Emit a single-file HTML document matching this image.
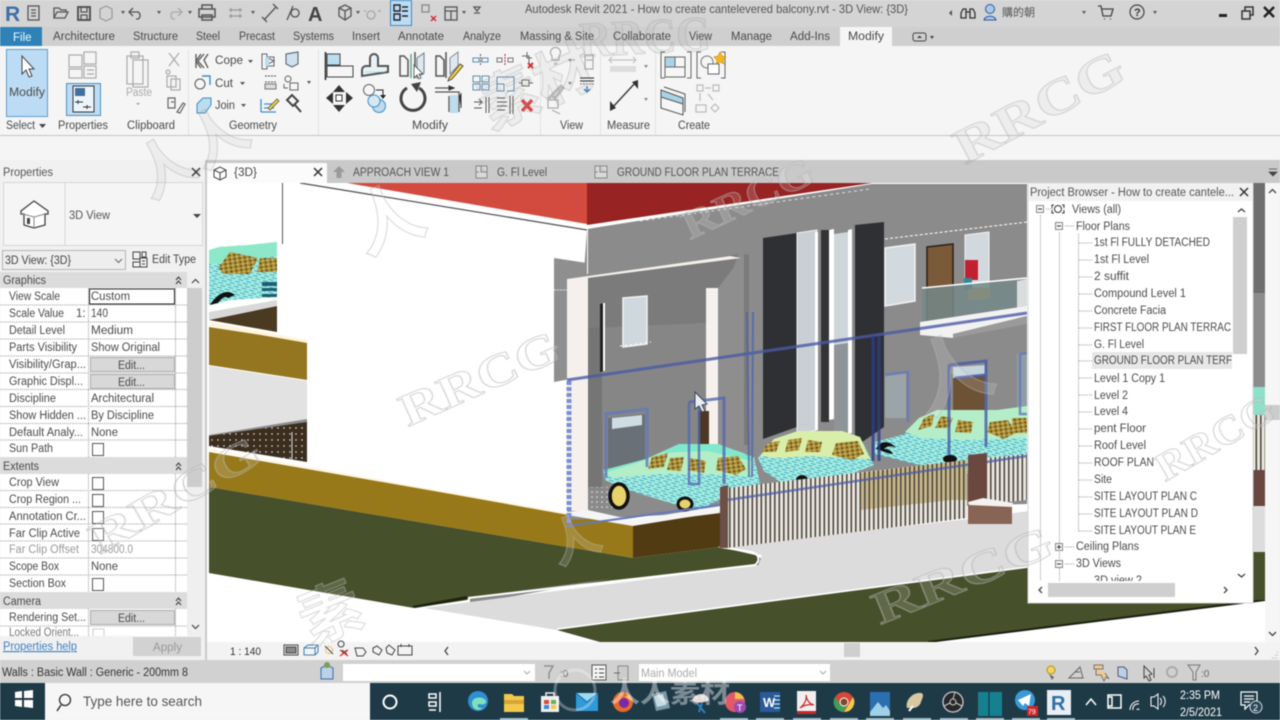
<!DOCTYPE html>
<html><head><meta charset="utf-8"><title>Autodesk Revit 2021</title>
<style>
html,body{margin:0;padding:0;width:1280px;height:720px;overflow:hidden;background:#f0f0f0}
svg{display:block;filter:blur(.5px)}
text{font-family:"Liberation Sans","Noto Sans CJK SC",sans-serif;font-size:11.5px;fill:#4a4a4a}
.t{font-size:11.5px;fill:#4a4a4a}
.g{fill:none;stroke:#555;stroke-width:1.3}
.f{fill:none;stroke:#aaa;stroke-width:1.2}
.b{fill:#bcdcf0;stroke:#555;stroke-width:1.2}
.d{stroke:#9a9a9a;stroke-width:1;stroke-dasharray:1 1;fill:none}
.w{font-family:"Liberation Serif",serif;font-weight:bold;fill:#fff;fill-opacity:.14;stroke:#b4b4b4;stroke-opacity:.5;stroke-width:1.2}
.wd{font-family:"Liberation Serif",serif;font-weight:bold;fill:#888;fill-opacity:.07;stroke:#999;stroke-opacity:.3;stroke-width:1.2}
.wc{font-family:"Noto Sans CJK SC",sans-serif;font-weight:bold;fill:#fff;fill-opacity:.14;stroke:#b4b4b4;stroke-opacity:.45;stroke-width:1.2}
.tb{fill:none;stroke:#fff;stroke-width:1.5}
</style></head><body>
<svg width="1280" height="720" viewBox="0 0 1280 720" xmlns="http://www.w3.org/2000/svg">
<defs>
<pattern id="fence" width="4.500" height="10" patternUnits="userSpaceOnUse"><rect width="1.600" height="10" fill="#4f4840"/></pattern>
<pattern id="dots" width="6" height="6" patternUnits="userSpaceOnUse"><rect width="6" height="6" fill="#3b2e1e"/><circle cx="2" cy="2" r=".7" fill="#fff"/></pattern>
<pattern id="dots2" width="5" height="5" patternUnits="userSpaceOnUse"><rect width="5" height="5" fill="#8a8a8a"/><circle cx="2" cy="2" r=".8" fill="#fff"/></pattern>
<pattern id="car" width="8" height="5" patternUnits="userSpaceOnUse" patternTransform="rotate(14)"><rect width="8" height="5" fill="#a6ecdd"/><path d="M0 1h5M3 3.500h5" stroke="#45aecf" stroke-width=".9"/></pattern>
<pattern id="glass" width="5" height="4" patternUnits="userSpaceOnUse" patternTransform="rotate(-8)"><rect width="5" height="4" fill="#ab8c34"/><circle cx="1.500" cy="1" r=".8" fill="#2e2410"/><circle cx="3.800" cy="3" r=".8" fill="#d2dc98"/></pattern>
<clipPath id="vp"><rect x="209" y="183" width="1056" height="459"/></clipPath>
<clipPath id="pbc"><rect x="1029" y="201" width="203" height="380"/></clipPath>
<clipPath id="propc"><rect x="0" y="288" width="187" height="348"/></clipPath>
</defs>

<!-- chrome backgrounds -->
<rect width="1280" height="720" fill="#f3f3f3"/>
<rect width="1280" height="27" fill="#d4d4d4"/>
<rect y="27" width="1280" height="19" fill="#cfcfcf"/>
<rect y="46" width="1280" height="114" fill="#f5f5f5"/>
<line x1="0" x2="1280" y1="135.500" y2="135.500" stroke="#c4c4c4"/>
<rect y="160" width="1280" height="23" fill="#c9c9c9"/>

<!-- quick access icons -->
<text x="5" y="21" style="font-size:21px;font-weight:bold;fill:#3f6fa6">R</text>
<g class="g">
<rect x="28" y="6" width="11" height="14"/><path d="M31 10h5M31 13h5M31 16h5"/>
<path d="M54 18V8h5l2 2h5v2M54 18l3-6h11l-3 6z"/>
<path d="M78 7h12v13H78z" stroke-width="2"/><path d="M81 7v5h6V7M81 20v-5h6v5"/>
<path class="f" d="M100 9l6-3 6 3v9l-6 3-6-3z" style="stroke:#999"/>
<path d="M133 8l-4 4 4 4M130 12h8a4 4 0 0 1 0 7h-2"/>
<path style="stroke:#aaa" d="M178 8l4 4-4 4M181 12h-8a4 4 0 0 0 0 7h2"/>
<path d="M202 9V5h10v4M199 9h16v8h-16zM202 15h10v5h-10z" stroke-width="1.500"/>
<path style="stroke:#999" d="M229 10h13M229 16h13M231 8v4M231 14v4M240 8v4M240 14v4"/>
<path d="M264 20l12-13M262 17l5 5M273 4l5 5"/>
<path d="M287 20l6-14M295 9a4 4 0 1 0 .100 0"/>
<path d="M339 8l6-3 6 3v8l-6 4-6-4zM339 8l6 3 6-3M345 11v9"/>
<path style="stroke:#a6a6a6" d="M371 11a4 4 0 1 0 .100 0M366 11h-2M378 11h3"/>
</g>
<text x="308" y="21" style="font-size:20px;font-weight:bold;fill:#444">A</text>
<rect x="390.500" y="0.500" width="21" height="25" fill="#bcdcf5" stroke="#3d8ac0"/>
<path d="M394 5h6v6h-6zM394 14h6v6h-6zM402 7h6M402 11h6M402 16h6" fill="none" stroke="#222" stroke-width="1.400"/>
<g class="g"><rect x="422" y="5" width="7" height="7" style="stroke:#888"/><path style="stroke:#c23" d="M431 16l5 5M436 16l-5 5"/><rect x="445" y="7" width="12" height="13"/><path d="M445 11h12M451 11v9"/><path d="M474 7h6l-3 4zM474 13h6" style="stroke:#555"/></g>
<g fill="#555"><path d="M121 11h4l-2 3zM157 11h4l-2 3zM188 11h4l-2 3zM251 11h4l-2 3zM356 11h4l-2 3zM462 11h4l-2 3zM1082 11h4l-2 3zM1153 11h4l-2 3z"/><path d="M952 10l-3 3 3 3z"/></g>

<!-- title -->
<text x="525" y="13" textLength="383" lengthAdjust="spacingAndGlyphs" style="font-size:12px;fill:#555">Autodesk Revit 2021 - How to create cantelevered balcony.rvt - 3D View: {3D}</text>
<g class="g" style="stroke:#333"><path d="M963 9h3v9h-5v-5zM970 9h3l2 4v5h-5z"/><path d="M966 12h4"/></g>
<circle cx="990" cy="9" r="4.500" fill="#a8c8ec" stroke="#2a5aa0"/><path d="M984 20c1-5 11-5 12 0z" fill="#a8c8ec" stroke="#2a5aa0"/>
<text x="1002" y="16" style="font-size:11px;fill:#555">購的朝</text>
<g class="g" style="stroke:#444"><path d="M1098 6h3l2 10h8l2-7h-11M1104 19h1M1110 19h1"/></g>
<circle cx="1137" cy="12" r="7" fill="none" stroke="#444" stroke-width="1.200"/><text x="1134" y="16" style="font-size:11px;font-weight:bold;fill:#333">?</text>
<rect x="1219" y="14" width="8" height="3" fill="#222"/>
<path d="M1242 11h8v8h-8zM1245 11V7h8v8h-3" fill="none" stroke="#333" stroke-width="1.500"/>
<path d="M1264 7l10 10M1274 7l-10 10" stroke="#222" stroke-width="2.500"/>

<!-- tabs -->
<rect y="27" width="42" height="19" fill="#2e82b8"/>
<text x="13" y="41" style="fill:#f4fbff;font-size:11.500px">File</text>
<rect x="840" y="27" width="52" height="19" fill="#f5f5f5"/>
<g class="t">
<text x="53" y="40" textLength="62" lengthAdjust="spacingAndGlyphs">Architecture</text>
<text x="133" y="40" textLength="45" lengthAdjust="spacingAndGlyphs">Structure</text>
<text x="196" y="40" textLength="24" lengthAdjust="spacingAndGlyphs">Steel</text>
<text x="239" y="40" textLength="36" lengthAdjust="spacingAndGlyphs">Precast</text>
<text x="293" y="40" textLength="41" lengthAdjust="spacingAndGlyphs">Systems</text>
<text x="352" y="40" textLength="28" lengthAdjust="spacingAndGlyphs">Insert</text>
<text x="398" y="40" textLength="46" lengthAdjust="spacingAndGlyphs">Annotate</text>
<text x="463" y="40" textLength="38" lengthAdjust="spacingAndGlyphs">Analyze</text>
<text x="520" y="40" textLength="74" lengthAdjust="spacingAndGlyphs">Massing &amp; Site</text>
<text x="613" y="40" textLength="58" lengthAdjust="spacingAndGlyphs">Collaborate</text>
<text x="689" y="40" textLength="23" lengthAdjust="spacingAndGlyphs">View</text>
<text x="731" y="40" textLength="41" lengthAdjust="spacingAndGlyphs">Manage</text>
<text x="790" y="40" textLength="40" lengthAdjust="spacingAndGlyphs">Add-Ins</text>
<text x="848" y="40" textLength="36" lengthAdjust="spacingAndGlyphs">Modify</text>
</g>
<rect x="913" y="33" width="13" height="8" rx="2" fill="none" stroke="#444"/><path d="M917 38l2.500-2.500 2.500 2.500z" fill="#444"/><path d="M930 36h4l-2 3z" fill="#444"/>

<!-- ribbon -->
<g stroke="#e2e2e2"><path d="M188.500 50v85M318.500 50v85M540.500 50v85M600.500 50v85M655.500 50v85"/></g>
<rect x="6.500" y="49.500" width="41" height="67" fill="#bcdcf5" stroke="#5c9ccc"/>
<path d="M22 56v18l4-4 3 7 3-1-3-7h5z" fill="#fff" stroke="#444"/>
<text x="9" y="96" textLength="36" lengthAdjust="spacingAndGlyphs">Modify</text>
<text x="6" y="129" textLength="29" lengthAdjust="spacingAndGlyphs">Select</text><path d="M39 124h7l-3.500 4z" fill="#444"/>
<text x="58" y="129" textLength="50" lengthAdjust="spacingAndGlyphs">Properties</text>
<text x="127" y="129" textLength="48" lengthAdjust="spacingAndGlyphs">Clipboard</text>
<text x="229" y="129" textLength="48" lengthAdjust="spacingAndGlyphs">Geometry</text>
<text x="412" y="129" textLength="36" lengthAdjust="spacingAndGlyphs">Modify</text>
<text x="560" y="129" textLength="23" lengthAdjust="spacingAndGlyphs">View</text>
<text x="607" y="129" textLength="43" lengthAdjust="spacingAndGlyphs">Measure</text>
<text x="678" y="129" textLength="32" lengthAdjust="spacingAndGlyphs">Create</text>

<g class="f"><rect x="69" y="55" width="13" height="12"/><rect x="69" y="69" width="13" height="9"/><rect x="84" y="52" width="12" height="12"/><rect x="84" y="66" width="12" height="12"/><path d="M87 70h7M87 74h7"/></g>
<rect x="66.500" y="83.500" width="34" height="32" fill="#bcdcf5" stroke="#4f8fbf"/>
<rect x="73" y="86" width="21" height="26" fill="#eef5fa" stroke="#333"/><rect x="75" y="88" width="10" height="8" fill="#3f6f9f"/><path d="M75 102h8M78 100v4M83 107h8M87 105v4" stroke="#333" fill="none"/>
<g class="f"><rect x="127" y="56" width="16" height="28"/><rect x="133" y="60" width="15" height="27"/><rect x="131" y="52" width="8" height="6"/></g>
<text x="126" y="96" textLength="26" lengthAdjust="spacingAndGlyphs" style="fill:#aaa">Paste</text><path d="M136 103h4l-2 2z" fill="#999"/>
<g class="f"><path d="M169 53l10 13M179 53l-10 13M168 70a2 2 0 1 0 .1 0"/><rect x="167" y="76" width="9" height="11"/><rect x="171" y="79" width="9" height="11"/></g>
<path d="M168 98h7v10h-7zM171 102h3M177 112l6-9 2 1-5 9z" fill="none" stroke="#666" stroke-width="1.200"/>
<g class="g"><path d="M196 54v14M201 54l-5 7 5 7M204 54l-6 7 6 7M208 54l-4 6 4 8"/></g>
<text x="215" y="64" textLength="28" lengthAdjust="spacingAndGlyphs">Cope</text><path d="M248 60h5l-2.500 3z" fill="#555"/>
<circle cx="200" cy="84" r="5" fill="none" stroke="#555"/><path d="M202 76h8v9" fill="none" stroke="#3f8fc0" stroke-width="1.400"/>
<text x="215" y="87" textLength="18" lengthAdjust="spacingAndGlyphs">Cut</text><path d="M240 82h5l-2.500 3z" fill="#555"/>
<path d="M197 113v-9l6-6h8v7l-6 8z" fill="#bcdcf0" stroke="#3f8fc0"/>
<text x="215" y="109" textLength="20" lengthAdjust="spacingAndGlyphs">Join</text><path d="M241 104h5l-2.500 3z" fill="#555"/>
<path d="M262 54h5v3h7v9h-7v3h-5zM268 58l6 3-6 3z" fill="none" stroke="#666"/><path d="M265 57h4v9h-4z" fill="#bcdcf0"/>
<path d="M286 54l12-2v12l-6 3-6-3z" fill="#cfe0ee" stroke="#556"/>
<path d="M265 76h11M265 82h11" stroke="#555" stroke-dasharray="2 1"/><rect x="265" y="84" width="11" height="5" fill="#ddd" stroke="#777"/>
<circle cx="288" cy="79" r="3" fill="none" stroke="#666"/><rect x="290" y="83" width="8" height="7" fill="none" stroke="#666"/><path d="M284 84v4h4" fill="none" stroke="#666"/><path d="M307 81h4l-2 3z" fill="#555"/>
<path d="M261 112V99M261 112h15M264 108h10M264 104h8" fill="none" stroke="#3f8fc0" stroke-width="1.300"/><path d="M268 108l9-9 2 2-9 9z" fill="#f2d23c" stroke="#555" stroke-width=".8"/>
<path d="M287 100l5-5 6 6-5 5zM295 105l6 7" fill="none" stroke="#444" stroke-width="2"/>

<!-- modify panel -->
<path d="M325.500 52v28" stroke="#222" stroke-width="1.500"/><rect x="327" y="54" width="13" height="11" fill="#bcdcf0" stroke="#444"/><rect x="327" y="66" width="26" height="11" fill="none" stroke="#444"/>
<path d="M362 76v-6a4 4 0 0 1 4-4h4v-8a4 4 0 0 1 8 0v8h10v6z" fill="#e8f1f7" stroke="#555" stroke-width="2"/><path d="M365 72h20" stroke="#8db" stroke-opacity=".6"/>
<path d="M400 56h4l4 4v16h-8zM415 52v26" fill="none" stroke="#555" stroke-width="1.500"/><path d="M411 54v24" stroke="#6a8" stroke-width="1.500"/><path d="M417 58l7-5v20l-7 5z" fill="#dde9f1" stroke="#778"/><path d="M414 65v13l3-3 2 4 2-1-2-4h4z" fill="#fff" stroke="#444" stroke-width=".8"/>
<path d="M436 56h4l4 4v16h-8zM446 52v26" fill="none" stroke="#555" stroke-width="1.500"/><path d="M450 58l8-6v14l-8 8z" fill="#dde9f1" stroke="#889"/><path d="M449 78l11-14 3 2-11 13-4 2z" fill="#f2d23c" stroke="#444" stroke-width=".9"/>
<g fill="none" stroke="#5b8fb0"><path d="M473 58h6v4h-6zM482 58h6v4h-6z"/><path stroke-dasharray="2 1" d="M480.500 54v12" stroke="#555"/><path d="M497 58h5v4h-5zM508 58h5v4h-5z" stroke="#777"/><path stroke-dasharray="2 1" d="M505 54v12" stroke="#a24"/><rect x="473" y="76" width="7" height="6"/><rect x="482" y="76" width="7" height="6"/><rect x="473" y="84" width="7" height="6"/><rect x="482" y="84" width="7" height="6"/><path d="M497 77h17v14h-7M497 77v14h7v-7h-7"/></g>
<g fill="none" stroke="#666"><path d="M522 56h7v7M527 52v6h5"/><path d="M522 80h7v6h-7zM529 83h4M522 83h-3"/></g>
<path d="M528 63l5 5M533 63l-5 5" stroke="#c33" stroke-width="2"/>
<path d="M522 100l10 11M532 100l-10 11" stroke="#d44" stroke-width="3.500"/>
<path d="M474 102h8M479 99l3 3-3 3M474 108h8M486 97v16M489 97v16" fill="none" stroke="#555"/>
<path d="M497 98h8M497 102h10M497 106h10M497 110h8M510 96v18M513 96v18" fill="none" stroke="#555"/>
<path d="M339 85l6 7h-12zM339 112l6-7h-12zM326 98l7-6v12zM353 98l-7-6v12z" fill="#333"/><rect x="336" y="95" width="6" height="6" fill="#fff" stroke="#333"/>
<circle cx="369" cy="90" r="5.500" fill="none" stroke="#666"/><path d="M376 90h7v6" fill="none" stroke="#222"/><path d="M380 95h6l-3 4z" fill="#222"/><circle cx="379" cy="106" r="6.500" fill="#bcdcf0" stroke="#3f8fc0"/><circle cx="374" cy="101" r="6" fill="#d6e8f3" stroke="#3f8fc0"/>
<path d="M407 88a12 12 0 1 0 12 0" fill="none" stroke="#444" stroke-width="3"/><path d="M411 84l10-2-4 10z" fill="#444"/>
<path d="M435 88h19M435 92h24v20M449 96v16" fill="none" stroke="#555" stroke-width="1.300"/><path d="M450 95h8v18h-8z" fill="#bcdcf0"/><path d="M449 86l5 2-5 2zM461 108v-14l-2 3" fill="#333" stroke="#333"/>

<!-- view panel -->
<g class="f"><path d="M552 56a5 5 0 1 1 7 0v4h-7zM554 64h3"/><path d="M572 60h3M585 55h8v14h-8zM586 60h7"/><path d="M551 96l10-10 2 2-8 10zM548 99l4-3" style="stroke:#bbb;stroke-width:3"/><rect x="548" y="100" width="10" height="8"/><path d="M552 110l8 4"/></g>
<path d="M580 78h14M580 81h14" stroke="#222"/><path d="M580 84h14" stroke="#777" stroke-dasharray="2 1"/><path d="M587 86v5M584 89l3 3 3-3" stroke="#3f7fc0" fill="none" stroke-width="1.500"/>
<g fill="#888"><path d="M568 59h4l-2 3zM568 82h4l-2 3zM644 65h4l-2 3zM644 98h4l-2 3z"/></g>
<!-- measure -->
<path d="M610 60h25M612 57l-3 3 3 3M633 57l3 3-3 3" fill="none" stroke="#bbb"/><rect x="610" y="66" width="26" height="6" fill="#ddd"/>
<path d="M612 108l24-26" stroke="#333" stroke-width="1.300"/><path d="M610 101l6 7-6 3zM638 89l-6-7 6-2z" fill="#333"/>
<!-- create -->
<path d="M665 52h-4v26h4M687 52h4v26h-4" fill="none" stroke="#666"/><path d="M665 57h20v20h-20z" fill="#f6f6f6" stroke="#666"/><path d="M665 57h10v10h-10z" fill="#a9d4e6" stroke="#666"/><path d="M675 67h10v10" fill="none" stroke="#666"/>
<path d="M701 52h-4v26h4M721 52h4v26h-4" fill="none" stroke="#666"/><circle cx="707" cy="62" r="6" fill="none" stroke="#777"/><rect x="708" y="64" width="11" height="10" fill="#fff" stroke="#666"/><path d="M720 52l2 4 4 1-3 3 1 4-4-2-4 2 1-4-3-3 4-1z" fill="#f2b824" stroke="#d89010" stroke-width=".7"/>
<path d="M661 90l22 8v16l-22-6z" fill="#a9d4e6" stroke="#555"/><path d="M664 87l21 7v18" fill="none" stroke="#555"/><path d="M661 97l22 7v11l-22-7z" fill="#f6f6f6" stroke="#555"/>
<g class="f" style="stroke:#bbb"><rect x="697" y="85" width="6" height="6"/><path d="M705 88h6"/><rect x="713" y="85" width="6" height="6"/><path d="M700 93v8M708 94l5 6"/><rect x="696" y="105" width="10" height="7"/><path d="M715 104l4 4-4 4-4-4z"/></g>

<!-- view tabs -->
<rect x="207" y="163" width="120" height="20" fill="#fbfbfb"/>
<path d="M214 170l6-3 6 3v7l-6 3-6-3zM214 170l6 3 6-3M220 173v7" fill="#fff" stroke="#444"/>
<text x="234" y="176" textLength="23" lengthAdjust="spacingAndGlyphs">{3D}</text>
<path d="M314 168l8 8M322 168l-8 8" stroke="#333" stroke-width="1.500"/>
<path d="M339 166l6 6h-3.500v6h-5v-6H333z" fill="#9a9a9a"/>
<text x="353" y="176" textLength="96" lengthAdjust="spacingAndGlyphs" style="fill:#555">APPROACH VIEW 1</text>
<path d="M476 166h11v12h-11zM481 166v6h6M476 172h3" fill="#d9d9d9" stroke="#888"/>
<text x="497" y="176" textLength="50" lengthAdjust="spacingAndGlyphs" style="fill:#555">G. Fl Level</text>
<path d="M595 166h12v12h-12zM600 166v6h7M595 172h3" fill="#d9d9d9" stroke="#888"/>
<text x="617" y="176" textLength="162" lengthAdjust="spacingAndGlyphs" style="fill:#555">GROUND FLOOR PLAN TERRACE</text>
<path d="M1269 169h8M1269 172h8l-4 4z" fill="#444" stroke="#444" stroke-width=".7"/>

<!-- 3D SCENE -->
<rect x="207" y="183" width="1073" height="459" fill="#fff"/>
<g clip-path="url(#vp)">
<!-- left small wing -->
<path d="M209 320l68-14v26z" fill="#4a3a22"/><path d="M209 312l68-12v6l-68 14z" fill="#d9d9d9"/>
<path d="M209 327l98 15v38l-98-15z" fill="#957620"/><path d="M209 322l98 18v3l-98-17z" fill="#fff3da"/>
<path d="M209 366l98 15v38l-98 16z" fill="#e2e2e2"/>
<path d="M209 435l98-16v4l-98 14z" fill="#8c8c8c"/>
<path d="M209 436l98-14v40l-98-16z" fill="url(#dots)"/>
<line x1="292" x2="292" y1="432" y2="460" stroke="#ddd"/>
<!-- left car -->
<path d="M209 282l0-27 10-8 30-2 28-3 0 32v23l-45 3-23 5z" fill="url(#car)"/>
<path d="M209 250l10-3 30-2 28-3v14l-68 8z" fill="#8ce8c8"/>
<path d="M218 268l12-16 28 6-8 16-26 0z" fill="url(#glass)"/><path d="M260 258h17v14h-20z" fill="url(#glass)"/>
<path d="M262 282h15v4h-15zM262 288h15v3h-15zM262 294h15v3h-15z" fill="#1c5e72"/>
<path d="M210 305c5-8 15-18 25-10l-7 3c-3-3-7 1-10 5z" fill="#111"/>
<line x1="282.500" x2="282.500" y1="183" y2="244" stroke="#555"/>

<!-- Ground olive -->
<path d="M209 452l358 62 66 8v36l-424-71z" fill="#97791a"/>
<path d="M209 450l358 64" stroke="#fff3da" stroke-width="1.500"/>
<path d="M633 524l87-11v34l-87 11z" fill="#513b12"/>
<path d="M209 487l424 71 87-11 35 8c8 3 8 8 3 10l-288 32-3 3-53 8-205-35z" fill="#46502a"/>
<path d="M415 608l52-9v-3l-55 10z" fill="#1c2412"/>
<path d="M470 604l140-25 8-1-148 19z" fill="#8a8a8a"/>
<!-- pavement -->
<path d="M424 608l46-6 288-37 4-10-45-8 252-28 300-40v120L557 630z" fill="#dcdcdc"/>
<path d="M720 547l32 5c8 3 8 9 3 13l-287 33" fill="none" stroke="#fff" stroke-width="2"/>
<!-- lower right green lawn -->
<path d="M557 630l470-62 238-30v62L928 642H600z" fill="#46502a"/>
<path d="M1265 600L928 642" stroke="#1a1f10" stroke-width="2"/>
<path d="M557 629l470-62" stroke="#fff" stroke-width="1.500"/>

<!-- red roof & wall -->
<path d="M347 183h240v41z" fill="#d24b3e"/>
<path d="M587 183h285L587 225z" fill="#972323"/>
<path d="M300 183l287 47" stroke="#555" stroke-width="1.300"/>
<path d="M587 229L872 184h155v320l-300 8-160 8z" fill="#8b8b8b"/>
<path d="M640 221l230-32" stroke="#fff" stroke-dasharray="3 3" stroke-opacity=".7"/>
<path d="M885 239l142-17" stroke="#fff" stroke-dasharray="3 2"/>
<rect x="587" y="229" width="1" height="45" fill="#fff"/>
<path d="M554 258l33 5v113l-33 6z" fill="#8f8f8f"/>
<path d="M554 290h18" stroke="#ddd" stroke-dasharray="2 1"/>
<!-- portico -->
<path d="M588 288l119-10v165l-119 50z" fill="#868686"/>
<path d="M588 300v190h14V300z" fill="#757575"/>
<path d="M588 278l150-24-22 67-9 2-119 5z" fill="#7b7b7b"/>
<path d="M567 279l163-23 11 2-153 20v3l-21 3z" fill="#f3efea"/>
<path d="M567 279h21v232h-21z" fill="#f5f0eb"/>
<rect x="706" y="288" width="12" height="158" fill="#f6f1ec"/>
<path d="M718 288l26-34 5 1-3 220-28-30z" fill="#8e8e8e"/><path d="M744 254l5 1v190h-5z" fill="#7a7a7a"/>
<path d="M600 304l4-1v68l-4 1z" fill="#222"/><path d="M603 303h2v68h-2z" fill="#fff"/>
<path d="M623 298l24-2v48l-24 3z" fill="#ced8dd" stroke="#f2f2f2" stroke-width="1.500"/>
<path d="M620 346l31-4" stroke="#fff" stroke-dasharray="2 3"/>
<path d="M763 238l34-5v194l-34 12z" fill="#2f3034"/>
<path d="M797 233l20-3v200l-20 4z" fill="#c8d0d5" stroke="#eee"/><path d="M815 232h3v198h-3z" fill="#fff"/>
<path d="M821 230h8v192h-8z" fill="#343437"/>
<path d="M829 230l5-1v190l-5 1z" fill="#fff"/>
<path d="M834 234l14-2v112l-14 1z" fill="#ced6da"/><path d="M834 345l14-2v90h-14z" fill="#8f9498"/>
<path d="M848 230l4-1v204l-4 1z" fill="#fff"/>
<path d="M855 225l29-3v205l-29 20z" fill="#2f3034"/>
<path d="M885 248l30-4v57l-30 5z" fill="#d3dadf" stroke="#f2f2f2" stroke-width="1.500"/>
<path d="M927 247l26-3v90h-26z" fill="#7a5a38" stroke="#2e2018" stroke-width="1.500"/>
<path d="M965 235l24-3v55h-24z" fill="#d2d9de" stroke="#f2f2f2"/>
<rect x="965" y="260" width="13" height="20" fill="#c22030"/>
<rect x="964" y="278" width="8" height="12" fill="#2f8a96"/>
<path d="M968 289l22-1v10l-22 3z" fill="#d9a53a"/>
<path d="M922 288l105-10v38l-105 16z" fill="#74888a" fill-opacity=".85"/>
<path d="M922 288l105-10" stroke="#fff" stroke-width="1.500"/>
<path d="M1017 281l10-2v31h-10z" fill="#d9dddd"/>
<path d="M920 322l107-16v10l-74 18v4l-33-3z" fill="#f2f2f2"/><path d="M953 334l74-18v8l-74 14z" fill="#9a9a9a"/>
<!-- windows & doors lower -->
<path d="M953 367l32-2v72l-32 3z" fill="#6e5236"/><path d="M953 367l32-2v10l-32 3z" fill="#c4d4dc"/>
<rect x="698" y="411" width="11" height="34" fill="#4d3824"/>
<path d="M608 418l37-4v52l-37 4z" fill="#6a7078"/><path d="M612 418l30-3v10l-30 4z" fill="#d0dce4"/>
<path d="M885 375l21-2v45h-21z" fill="#9ba5a8"/>
<path d="M1017 354l10-1v60h-10z" fill="#8e9ea2"/>

<!-- tan wall & speckle behind cars -->
<path d="M588 487h30v24h-30z" fill="url(#dots2)" opacity=".8"/>
<!-- cars -->
<path d="M603 470l42-9 33-15 40-2 36 13 6 26-50 21-8 6-22-4-55-17-20-9z" fill="url(#car)"/>
<path d="M604 470l42-11 33-15 39 0 36 14-2 18-50-2-40 0-50 4z" fill="#b4eec8"/>
<path d="M604 470l42-11 33-15 39 0 36 14-2 3-45-10-45 2-25 10-30 9z" fill="#80e8cc"/>
<path d="M648 469l4-12 16-4-4 14zM667 470l3-12 14-1-3 14zM688 470l2-12 16 3-2 12zM716 470l2-12 20-2 8 13-10 6z" fill="url(#glass)"/>
<path d="M758 458l16-19 24-8 44 0 18 6 14 28-30 12-40 12-10 2-30-20z" fill="url(#car)"/>
<path d="M760 456l14-17 24-8 44 0 18 6 10 22-60-3-30 2z" fill="#d8eeaa"/>
<path d="M762 452l6-9 12-2-4 11zM785 452l3-12 14-2-3 12zM805 452l3-12 14 2-2 10zM832 455l4-12 22-2 6 13-12 6z" fill="url(#glass)"/>
<path d="M875 442l30-8 14-14 18-8 60 0 30-4v54l-40 4-22 8-50-10-40-10z" fill="url(#car)"/>
<path d="M905 432l14-14 18-8 60 0 30-4v32l-60 2-45-2z" fill="#b4eec8"/>
<path d="M918 430l6-12 10-4-2 12zM935 428l6-12 12 2-4 10zM955 432l3-12 15 2-2 11zM987 432l3-10 18-2 8 13-12 6z" fill="url(#glass)"/>
<path d="M1012 418h15v15h-15z" fill="url(#glass)"/>
<path d="M876 449c4-9 14-9 20-1-5-3-9-2-12 1 4 0 8 2 9 5-5 0-10-3-17-5z" fill="#111"/><ellipse cx="950" cy="459" rx="7" ry="4" fill="#111"/>
<ellipse cx="802" cy="480" rx="6" ry="5" fill="#111"/>
<ellipse cx="619" cy="496" rx="9" ry="12" fill="#e8d26a" stroke="#111" stroke-width="3.500"/>
<ellipse cx="685" cy="504" rx="7" ry="6" fill="#e8d26a" stroke="#111" stroke-width="3"/>

<!-- blue sketch lines -->
<g fill="none" stroke="#4a5aa5" stroke-opacity=".8">
<path d="M567 380L1027 313" stroke-width="3"/>
<path d="M605 414l42-5v58" stroke-width="3" stroke="#6478bc"/><path d="M606 414v64" stroke-width="3" stroke="#6478bc"/>
<path d="M689 402l35-4v86" stroke-width="3" stroke="#5668b0"/><path d="M689 402v82h10v-84" stroke-width="2.500" stroke="#5668b0"/>
<path d="M747 312l2 165M753 312l-1 165" stroke-width="2" stroke="#5066a8"/>
<path d="M873 336v125M879 336v125" stroke-width="3" stroke="#2a3f90"/>
<path d="M885 375l23-3v50" stroke-width="2.500" stroke="#6478bc"/>
<path d="M949 365l37-4v86" stroke-width="3" stroke="#495ba8"/><path d="M949 365v90M955 378l30-3" stroke-width="3" stroke="#495ba8"/>
<path d="M1020 354l7-1M1020 354v60h7" stroke-width="2.500" stroke="#6478bc"/>
</g>
<!-- fence -->
<path d="M727 488l240-28v58l-240 30z" fill="#e9e6df"/>
<path d="M860 473l107-13v40l-15 0-92 10z" fill="#c8b88a"/>
<path d="M987 458l40-4v46l-40 4z" fill="#e9e6df"/>
<path d="M727 488l240-28v58l-240 30zM987 458l40-4v46l-40 4z" fill="url(#fence)"/>
<path d="M727 500l300-44" stroke="#4a5aa5" stroke-opacity=".7" stroke-width="2.500"/>
<path d="M720 487l8-2v63h-8z" fill="#6c5048"/>
<path d="M968 455l19-2v50h-19z" fill="#6a4840"/>
<path d="M968 503l44 3v18h-44z" fill="#876453"/><path d="M968 502l15-4 30 5v4l-44-2z" fill="#f4f2f0"/>
<!-- slab -->
<path d="M567 512l21-2 45 10 87-14v6l-87 14-66-11z" fill="#f5f5f5"/>
<path d="M569 381V527" stroke="#7d8fd4" stroke-width="5" stroke-dasharray="4 2" fill="none"/>
<path d="M567 526L720 505" stroke-width="2" stroke="#6478bc" fill="none"/>
<!-- strip right of browser -->
<rect x="1253" y="183" width="12" height="110" fill="#6e6e6e"/>
<rect x="1253" y="293" width="12" height="94" fill="#8c8c8c"/>
<rect x="1253" y="387" width="12" height="28" fill="#8fe0c8"/>
<rect x="1253" y="415" width="12" height="55" fill="#e9e6df"/><rect x="1253" y="415" width="12" height="55" fill="url(#fence)"/>
<rect x="1253" y="470" width="12" height="36" fill="#6a4840"/>
<rect x="1253" y="506" width="12" height="46" fill="#dcdcdc"/>
<rect x="1253" y="552" width="12" height="48" fill="#46502a"/>
</g>
<!-- cursor -->
<path d="M695 392v17l4-3 3 6 3-1-3-6 5-1z" fill="#e9eef4" stroke="#3a4a5a"/>
<!-- right scroll -->
<rect x="1265" y="183" width="15" height="459" fill="#f6f6f6"/>
<path d="M1269 193l3.500-3.500 3.500 3.500M1269 632l3.500 3.500 3.500-3.500" fill="none" stroke="#444" stroke-width="1.300"/>
<rect x="1265" y="405" width="15" height="15" fill="#ccc"/>

<!-- view control bar -->
<rect x="207" y="642" width="1073" height="18" fill="#f3f3f3"/>
<text x="230" y="655" textLength="31" lengthAdjust="spacingAndGlyphs" style="font-size:11px;fill:#333">1 : 140</text>
<g fill="none" stroke="#444"><rect x="284" y="645" width="14" height="10"/><rect x="286" y="647" width="10" height="6" fill="#888"/><path d="M304 655v-7l4-3h10v7l-3 3zM304 648h11v7M315 648l3-3" stroke="#3f7fb0"/><circle cx="329" cy="650" r="3.500" stroke="#e0a020" stroke-dasharray="1.500 1"/><path d="M325 646l8 8"/><path d="M341 647a3 3 0 1 1 .100 0M342 654l5-4M347 654l-5-4" /><path d="M355 648h8l3 4-3 4h-6z" /><path d="M373 648l4-2 5 4-3 5-6-3zM386 648l3-3 6 5-3 5-5-2z"/><path d="M398 646h14v9h-14zM401 644v3M409 644v3" /></g>
<path d="M340 650l8 6M348 650l-8 6" stroke="#c33" stroke-width="1.300"/>
<path d="M448 647l-3 4 3 4" fill="none" stroke="#444" stroke-width="1.300"/>
<rect x="844" y="643" width="16" height="14" fill="#cfcfcf"/>
<path d="M1255 647l3 4-3 4" fill="none" stroke="#444" stroke-width="1.300"/>
<path d="M1272 658h6M1275 655h3M1277 652h1" stroke="#aaa" stroke-dasharray="1 1"/>

<!-- properties panel -->
<rect x="0" y="160" width="205" height="500" fill="#f1f1f1"/>
<rect x="205" y="160" width="2" height="500" fill="#c9c9c9"/>
<text x="3" y="176" textLength="50" lengthAdjust="spacingAndGlyphs" style="fill:#555">Properties</text>
<path d="M192 168l8 8M200 168l-8 8" stroke="#333" stroke-width="1.500"/>
<rect x="3.500" y="182.500" width="199" height="63" fill="#f5f5f5" stroke="#d6d6d6"/>
<line x1="65" x2="65" y1="183" y2="245" stroke="#d6d6d6"/>
<path d="M34 201l14 10v3h-3v11l-11 3-10-3v-11h-3v-3z" fill="#fff" stroke="#444" stroke-width="1.300"/><path d="M23 214l11 3 11-3M34 217v11" fill="none" stroke="#888"/><rect x="27" y="218" width="3" height="6" fill="#444"/>
<text x="69" y="219" textLength="41" lengthAdjust="spacingAndGlyphs" style="fill:#555">3D View</text>
<path d="M193 214h8l-4 4z" fill="#444"/>
<rect x="2.500" y="250.500" width="123" height="19" fill="#eee" stroke="#b4b4b4"/>
<text x="5" y="264" textLength="66" lengthAdjust="spacingAndGlyphs" style="fill:#444">3D View: {3D}</text>
<path d="M115 259l3.500 3.500L122 259" fill="none" stroke="#666"/>
<path d="M133 252h7v7h-7zM133 262h7v5h-7zM142 252h4v5h-4zM140 258h7v9h-7zM142 261h3M142 264h3" fill="none" stroke="#444"/>
<text x="152" y="263" textLength="44" lengthAdjust="spacingAndGlyphs" style="fill:#444">Edit Type</text>

<!-- scrollbar -->
<rect x="187" y="272" width="16" height="364" fill="#efefef"/>
<rect x="187" y="288" width="15" height="199" fill="#cdcdcd"/>
<path d="M192 283l3.500-3.500 3.500 3.500M192 625l3.500 3.500 3.500-3.500" fill="none" stroke="#444" stroke-width="1.200"/>
<!-- table -->
<rect x="0" y="288" width="187" height="348" fill="#fff"/>
<rect x="0" y="272" width="187" height="16" fill="#dcdcdc"/>
<rect x="0" y="457" width="187" height="17" fill="#dcdcdc"/>
<rect x="0" y="592" width="187" height="17" fill="#dcdcdc"/>
<g class="d"><path d="M0 305h187M0 322h187M0 339h187M0 356h187M0 373h187M0 389.500h187M0 406.500h187M0 423.500h187M0 440h187M0 490.500h187M0 507.500h187M0 524h187M0 541h187M0 558h187M0 575h187M0 626h187"/><path d="M88.500 288v169M88.500 474v118M88.500 609v27M175.500 288v169M175.500 474v118M175.500 609v27"/></g>
<rect x="89.500" y="289" width="85" height="15" fill="#fff" stroke="#222"/>
<g fill="#d8d8d8" stroke="#aaa"><rect x="90.500" y="357.500" width="84" height="14"/><rect x="90.500" y="374.500" width="84" height="14"/><rect x="90.500" y="610.500" width="84" height="14"/></g>
<text x="3" y="284" textLength="43" lengthAdjust="spacingAndGlyphs">Graphics</text>
<text x="3" y="470" textLength="36" lengthAdjust="spacingAndGlyphs">Extents</text>
<text x="3" y="605" textLength="38" lengthAdjust="spacingAndGlyphs">Camera</text>
<g fill="none" stroke="#333"><path d="M176 280l2.500-3 2.500 3M176 284l2.500-3 2.500 3M176 466l2.500-3 2.500 3M176 470l2.500-3 2.500 3M176 601l2.500-3 2.500 3M176 605l2.500-3 2.500 3"/></g>
<g style="font-size:11px">
<text x="9" y="300" textLength="51" lengthAdjust="spacingAndGlyphs">View Scale</text><text x="91" y="300" textLength="39" lengthAdjust="spacingAndGlyphs">Custom</text>
<text x="9" y="317" textLength="55" lengthAdjust="spacingAndGlyphs">Scale Value</text><text x="76" y="317">1:</text><text x="91" y="317" textLength="17" lengthAdjust="spacingAndGlyphs">140</text>
<text x="9" y="334" textLength="56" lengthAdjust="spacingAndGlyphs">Detail Level</text><text x="91" y="334" textLength="42" lengthAdjust="spacingAndGlyphs">Medium</text>
<text x="9" y="351" textLength="68" lengthAdjust="spacingAndGlyphs">Parts Visibility</text><text x="91" y="351" textLength="69" lengthAdjust="spacingAndGlyphs">Show Original</text>
<text x="9" y="368" textLength="77" lengthAdjust="spacingAndGlyphs">Visibility/Grap...</text><text x="118" y="369" textLength="27" lengthAdjust="spacingAndGlyphs">Edit...</text>
<text x="9" y="385" textLength="74" lengthAdjust="spacingAndGlyphs">Graphic Displ...</text><text x="118" y="386" textLength="27" lengthAdjust="spacingAndGlyphs">Edit...</text>
<text x="9" y="402" textLength="47" lengthAdjust="spacingAndGlyphs">Discipline</text><text x="91" y="402" textLength="63" lengthAdjust="spacingAndGlyphs">Architectural</text>
<text x="9" y="419" textLength="77" lengthAdjust="spacingAndGlyphs">Show Hidden ...</text><text x="91" y="419" textLength="63" lengthAdjust="spacingAndGlyphs">By Discipline</text>
<text x="9" y="436" textLength="74" lengthAdjust="spacingAndGlyphs">Default Analy...</text><text x="91" y="436" textLength="27" lengthAdjust="spacingAndGlyphs">None</text>
<text x="9" y="452" textLength="44" lengthAdjust="spacingAndGlyphs">Sun Path</text>
<text x="9" y="486" textLength="50" lengthAdjust="spacingAndGlyphs">Crop View</text>
<text x="9" y="503" textLength="72" lengthAdjust="spacingAndGlyphs">Crop Region ...</text>
<text x="9" y="520" textLength="77" lengthAdjust="spacingAndGlyphs">Annotation Cr...</text>
<text x="9" y="537" textLength="71" lengthAdjust="spacingAndGlyphs">Far Clip Active</text>
<text x="9" y="553" textLength="70" lengthAdjust="spacingAndGlyphs" style="fill:#999">Far Clip Offset</text><text x="91" y="553" textLength="42" lengthAdjust="spacingAndGlyphs" style="fill:#999">304800.0</text>
<text x="9" y="570" textLength="50" lengthAdjust="spacingAndGlyphs">Scope Box</text><text x="91" y="570" textLength="27" lengthAdjust="spacingAndGlyphs">None</text>
<text x="9" y="587" textLength="57" lengthAdjust="spacingAndGlyphs">Section Box</text>
<text x="9" y="621" textLength="77" lengthAdjust="spacingAndGlyphs">Rendering Set...</text><text x="118" y="622" textLength="27" lengthAdjust="spacingAndGlyphs">Edit...</text>
<g clip-path="url(#propc)"><text x="9" y="636" textLength="70" lengthAdjust="spacingAndGlyphs" style="fill:#777">Locked Orient...</text></g>
</g>
<g fill="#fff" stroke="#555"><rect x="92.500" y="443.500" width="11" height="12"/><rect x="92.500" y="477.500" width="11" height="12"/><rect x="92.500" y="494.500" width="11" height="12"/><rect x="92.500" y="511.500" width="11" height="12"/><rect x="92.500" y="528.500" width="11" height="12"/><rect x="92.500" y="578.500" width="11" height="12"/></g>
<rect x="0" y="636" width="205" height="24" fill="#f1f1f1"/>
<path d="M93 636v-7h11v7" fill="#fff" stroke="#ccc"/>
<text x="3" y="650" textLength="74" lengthAdjust="spacingAndGlyphs" style="fill:#3f80c0;text-decoration:underline">Properties help</text>
<rect x="133" y="637" width="68" height="19" fill="#d2d2d2"/>
<text x="153" y="651" textLength="29" lengthAdjust="spacingAndGlyphs" style="fill:#999">Apply</text>

<!-- status bar -->
<rect y="660" width="1280" height="23" fill="#d1d1d1"/>
<text x="2" y="676" textLength="186" lengthAdjust="spacingAndGlyphs" style="fill:#333">Walls : Basic Wall : Generic - 200mm 8</text>
<path d="M321 668l6-3 6 3v11h-12z" fill="#bcd0e8" stroke="#3a6fa8"/><circle cx="327" cy="665" r="3" fill="#7aa050"/>
<rect x="343" y="664" width="192" height="17" fill="#fff"/><path d="M524 671l3 3 3-3" fill="none" stroke="#aaa"/>
<path d="M544 666h9l-4 7v6" fill="none" stroke="#888" stroke-width="1.300"/><text x="560" y="677" style="font-size:10px;fill:#666">:0</text>
<rect x="592" y="665" width="14" height="15" fill="#f5f5f5" stroke="#555"/><path d="M595 669h2M599 669h5M595 673h2M599 673h5M595 677h2M599 677h5" stroke="#444"/>
<path d="M618 666h10v14h-10z" fill="#ccc" stroke="#888"/><path d="M614 673h6" stroke="#666"/>
<rect x="639" y="664" width="191" height="17" fill="#fff"/><text x="641" y="677" textLength="56" lengthAdjust="spacingAndGlyphs" style="fill:#aaa">Main Model</text><path d="M820 671l3 3 3-3" fill="none" stroke="#aaa"/>
<circle cx="1051" cy="670" r="4" fill="#f3d55c" stroke="#b09020"/><path d="M1049 674l3 6 2-3z" fill="#666"/>
<path d="M1069 678l11-11 3 11zM1075 672h5" fill="none" stroke="#666"/>
<path d="M1094 665h9v4h-9zM1096 669v6h5l3 6 2-4 3 2-4-6" fill="#f2c88c" stroke="#777"/>
<path d="M1118 667h6l3 3v9l-9-3z" fill="#bcd0e8" stroke="#557"/>
<path d="M1144 666l8 8-3 1 2 5-2 1-3-5-2 2zM1154 668v10" fill="none" stroke="#444"/>
<circle cx="1172" cy="672" r="5" fill="none" stroke="#aaa" stroke-width="2"/>
<path d="M1188 665h12l-4 7v8h-3v-8z" fill="none" stroke="#777"/><text x="1201" y="677" style="font-size:10px;fill:#666">:0</text>

<!-- project browser -->
<rect x="1028" y="183" width="225" height="420" fill="#fff" stroke="#d4d4d4"/>
<rect x="1029" y="184" width="223" height="17" fill="#f1f1f1"/>
<text x="1030" y="196" textLength="204" lengthAdjust="spacingAndGlyphs" style="fill:#555">Project Browser - How to create cantele...</text>
<path d="M1240 188l8 8M1248 188l-8 8" stroke="#333" stroke-width="1.500"/>
<rect x="1092" y="352" width="140" height="17" fill="#e7e7e7"/>
<rect x="1233" y="217" width="14" height="137" fill="#cfcfcf"/>
<path d="M1238 212l3.500-3 3.500 3M1238 574l3.500 3 3.500-3" fill="none" stroke="#444" stroke-width="1.300"/>
<g clip-path="url(#pbc)">
<g class="d"><path d="M1040.500 215v366M1059.500 232v350M1078.500 234v297M1046 209h8M1065 226h10M1079 243h14M1079 260h14M1079 277h14M1079 294h14M1079 311h14M1079 328h14M1079 345h14M1079 361h14M1079 378h14M1079 395h14M1079 412h14M1079 429h14M1079 446h14M1079 463h14M1079 480h14M1079 497h14M1079 514h14M1079 531h14M1065 547h10M1065 564h10"/></g>
<g fill="#f4f4f4" stroke="#888"><rect x="1036.500" y="205.500" width="7" height="7"/><rect x="1055.500" y="222.500" width="7" height="7"/><rect x="1055.500" y="543.500" width="7" height="7"/><rect x="1055.500" y="560.500" width="7" height="7"/></g>
<path d="M1038 209h4M1057 226h4M1057 547h4M1059 545v4M1057 564h4" stroke="#333"/>
<path d="M1054 205h-2v3M1062 205h2v3M1054 213h-2v-3M1062 213h2v-3" fill="none" stroke="#333"/><circle cx="1058" cy="209" r="3.500" fill="none" stroke="#333"/>
<g style="font-size:11px;fill:#333">
<text x="1072" y="213" textLength="49" lengthAdjust="spacingAndGlyphs">Views (all)</text>
<text x="1076" y="230" textLength="54" lengthAdjust="spacingAndGlyphs">Floor Plans</text>
<text x="1094" y="246" textLength="116" lengthAdjust="spacingAndGlyphs">1st Fl FULLY DETACHED</text>
<text x="1094" y="263" textLength="55" lengthAdjust="spacingAndGlyphs">1st Fl Level</text>
<text x="1094" y="280" textLength="35" lengthAdjust="spacingAndGlyphs">2 suffit</text>
<text x="1094" y="297" textLength="92" lengthAdjust="spacingAndGlyphs">Compound Level 1</text>
<text x="1094" y="314" textLength="72" lengthAdjust="spacingAndGlyphs">Concrete Facia</text>
<text x="1094" y="331" textLength="137" lengthAdjust="spacingAndGlyphs">FIRST FLOOR PLAN TERRAC</text>
<text x="1094" y="348" textLength="50" lengthAdjust="spacingAndGlyphs">G. Fl Level</text>
<text x="1094" y="364" textLength="138" lengthAdjust="spacingAndGlyphs">GROUND FLOOR PLAN TERF</text>
<text x="1094" y="382" textLength="71" lengthAdjust="spacingAndGlyphs">Level 1 Copy 1</text>
<text x="1094" y="399" textLength="34" lengthAdjust="spacingAndGlyphs">Level 2</text>
<text x="1094" y="415" textLength="34" lengthAdjust="spacingAndGlyphs">Level 4</text>
<text x="1094" y="432" textLength="52" lengthAdjust="spacingAndGlyphs">pent Floor</text>
<text x="1094" y="449" textLength="52" lengthAdjust="spacingAndGlyphs">Roof Level</text>
<text x="1094" y="466" textLength="60" lengthAdjust="spacingAndGlyphs">ROOF PLAN</text>
<text x="1094" y="483" textLength="18" lengthAdjust="spacingAndGlyphs">Site</text>
<text x="1094" y="500" textLength="103" lengthAdjust="spacingAndGlyphs">SITE LAYOUT PLAN C</text>
<text x="1094" y="517" textLength="104" lengthAdjust="spacingAndGlyphs">SITE LAYOUT PLAN D</text>
<text x="1094" y="534" textLength="102" lengthAdjust="spacingAndGlyphs">SITE LAYOUT PLAN E</text>
<text x="1076" y="550" textLength="63" lengthAdjust="spacingAndGlyphs">Ceiling Plans</text>
<text x="1076" y="567" textLength="45" lengthAdjust="spacingAndGlyphs">3D Views</text>
<text x="1094" y="584" textLength="48" lengthAdjust="spacingAndGlyphs">3D view 2</text>
</g></g>
<rect x="1029" y="581" width="223" height="21" fill="#fff"/>
<rect x="1048" y="583" width="127" height="14" fill="#cfcfcf"/>
<path d="M1042 587l-3 3 3 3M1224 587l3 3-3 3" fill="none" stroke="#444" stroke-width="1.300"/>

<!-- taskbar -->
<rect y="683" width="1280" height="37" fill="#1f3a47"/>
<rect x="45" y="683" width="325" height="37" fill="#f6f6f6"/>
<path d="M15 692l7-1v7h-7zM24 691l9-1v8h-9zM15 700h7v7l-7-1zM24 700h9v8l-9-1z" fill="#fff"/>
<circle cx="65" cy="700" r="5.500" fill="none" stroke="#333" stroke-width="1.300"/><path d="M61 705l-4 6" stroke="#333" stroke-width="1.500"/>
<text x="83" y="706" textLength="119" lengthAdjust="spacingAndGlyphs" style="font-size:14px;fill:#555">Type here to search</text>
<circle cx="390" cy="702" r="6.500" class="tb" style="stroke-width:2"/>
<path d="M429 694h7v4h-7zM429 702h7v4h-7zM429 710h7M440 692v20" class="tb"/>
<circle cx="478" cy="701" r="10" fill="#2f8fd0"/><path d="M472 703c0-7 12-7 14-2 1 3-3 4-7 3-3 1-1 5 4 4-5 4-11 1-11-5z" fill="#7fe0c0"/>
<path d="M504 694h8l2 2h10v16h-20z" fill="#f2c94c"/><rect x="504" y="700" width="20" height="4" fill="#d8a534"/>
<path d="M541 696h18v16h-18z" fill="#eee"/><path d="M546 696v-3h8v3" fill="none" stroke="#eee" stroke-width="1.500"/><rect x="544" y="700" width="5" height="4" fill="#e04a3a"/><rect x="551" y="700" width="5" height="4" fill="#6ab04a"/><rect x="544" y="705" width="5" height="4" fill="#3a8ad8"/><rect x="551" y="705" width="5" height="4" fill="#f2c94c"/>
<rect x="576" y="693" width="22" height="18" fill="#2f9ad8"/><path d="M576 693l11 9 11-9" fill="#9cd8f0" stroke="#0e6aa0"/>
<circle cx="623" cy="702" r="10" fill="#e86a2a"/><circle cx="624" cy="703" r="5" fill="#7a2aa8"/><path d="M617 692c5 4 9 6 12 3l3 6" fill="#f2c94c"/>
<path d="M652 694l14-3 4 17-14 3z" fill="#7a9aa8"/><path d="M654 696l9-2 3 11-9 2z" fill="#c8dae0"/>
<path d="M692 700c4-8 15-8 17 0-4 3-14 4-17 0z" fill="#e8d8d8"/><path d="M697 703l8 10M702 703l-3 9" stroke="#2a80c0" stroke-width="2"/>
<circle cx="735" cy="702" r="10" fill="#e05a6a"/><path d="M735 692a10 10 0 0 1 9 7h-9z" fill="#f2c04c"/><circle cx="740" cy="707" r="6" fill="#9a4ab0"/><text x="737" y="711" style="font-size:9px;fill:#fff">T</text>
<rect x="760" y="692" width="20" height="20" fill="#2a5a9a"/><text x="763" y="707" style="font-size:13px;font-weight:bold;fill:#fff">W</text><path d="M774 696h6M774 700h6M774 704h6M774 708h6" stroke="#cfe"/>
<rect x="797" y="691" width="19" height="23" fill="#f2eeee"/><path d="M800 708c5-4 7-9 6-13 1 6 4 9 8 10-5-1-10 0-14 3z" fill="none" stroke="#c8282a" stroke-width="1.200"/><rect x="797" y="711" width="19" height="3" fill="#c8282a"/>
<circle cx="844" cy="702" r="10" fill="#d8483a"/><path d="M835 697a10 10 0 0 0 8 15l4-6h-6z" fill="#3aa05a"/><path d="M853 697a10 10 0 0 1-9 15l5-8z" fill="#f2c94c"/><circle cx="844" cy="702" r="4" fill="#7a4a2a" stroke="#fff"/>
<path d="M870 692h20v24h-20z" fill="#2a70b0"/><path d="M870 712l8-10 5 6 3-3 4 6v5h-20z" fill="#a0d0e8"/>
<path d="M907 708c-2-8 6-16 14-15 4 1 1 6 0 9-1 4-5 6-8 6z" fill="#d8c8a0"/><path d="M909 711l4-5" stroke="#fff" stroke-width="2"/>
<circle cx="953" cy="702" r="10" fill="#26282a" stroke="#ccc" stroke-width="1.300"/><circle cx="953" cy="702" r="3" fill="none" stroke="#ccc"/><path d="M953 699l2-7M956 703l6 3M950 703l-6 3" stroke="#ccc"/>
<rect x="978" y="692" width="24" height="24" fill="#17808f"/><path d="M989 692v24" stroke="#0e4a55" stroke-width="1.500"/>
<circle cx="1025" cy="700" r="10" fill="#3a9ad8"/><path d="M1018 700l13-6-2 12-4-3-2 3z" fill="#fff"/><rect x="1027" y="706" width="11" height="10" fill="#c8282a"/><text x="1028" y="714" style="font-size:7px;fill:#fff">79</text>
<rect x="1047" y="690" width="24" height="25" fill="#e8eef4"/><text x="1051" y="710" style="font-size:20px;font-weight:bold;fill:#2f6fa6">R</text>
<path d="M1086 705l5-6 5 6M1108 695h13v13h-13zM1108 697h4v9h-4" class="tb"/>
<path d="M1130 710a9 9 0 0 1 9-9M1133 710a5 5 0 0 1 6-6M1137 710a1 1 0 0 1 2 0M1151 697h3l4-3v15l-4-3h-3zM1160 698a5 5 0 0 1 0 7M1163 696a8 8 0 0 1 0 11" class="tb" style="stroke-width:1"/>
<text x="1180" y="699" textLength="40" lengthAdjust="spacingAndGlyphs" style="font-size:12px;fill:#fff">2:35 PM</text>
<text x="1180" y="716" textLength="42" lengthAdjust="spacingAndGlyphs" style="font-size:12px;fill:#fff">2/5/2021</text>
<path d="M1241 692h16v13h-8l-4 4v-4h-4zM1244 696h10M1244 699h10M1244 702h6" class="tb" style="stroke-width:1.200"/>
<circle cx="1256" cy="707" r="6" fill="#2a4a5a" stroke="#fff" stroke-width=".8"/><text x="1253" y="711" style="font-size:9px;fill:#fff">2</text>
<g fill="#9fb8c4"><rect x="500" y="718" width="28" height="2"/><rect x="720" y="718" width="28" height="2"/><rect x="756" y="718" width="28" height="2"/><rect x="793" y="718" width="28" height="2"/><rect x="830" y="718" width="28" height="2"/><rect x="866" y="718" width="28" height="2"/><rect x="903" y="718" width="28" height="2"/><rect x="940" y="718" width="28" height="2"/><rect x="976" y="718" width="28" height="2"/><rect x="1012" y="718" width="28" height="2"/><rect x="1047" y="718" width="28" height="2"/></g>

<!-- watermarks -->
<text class="wd" transform="translate(580 57) rotate(-3)" style="font-size:50px" textLength="132" lengthAdjust="spacingAndGlyphs">RRCG</text>
<text class="wd" transform="translate(965 165) rotate(-28)" style="font-size:50px" textLength="185" lengthAdjust="spacingAndGlyphs">RRCG</text>
<text class="w" transform="translate(408 427) rotate(-24)" style="font-size:46px" textLength="170" lengthAdjust="spacingAndGlyphs">RRCG</text>
<text class="w" transform="translate(100 555) rotate(-30)" style="font-size:44px" textLength="190" lengthAdjust="spacingAndGlyphs">RRCG</text>
<text class="w" transform="translate(880 625) rotate(-22)" style="font-size:46px" textLength="190" lengthAdjust="spacingAndGlyphs">RRCG</text>
<text class="w" transform="translate(1165 482) rotate(-30)" style="font-size:40px" textLength="130" lengthAdjust="spacingAndGlyphs">RRCG</text>
<text class="w" transform="translate(690 240) rotate(-25)" style="font-size:40px" textLength="140" lengthAdjust="spacingAndGlyphs">RRCG</text>
<text class="wc" transform="translate(365 255) rotate(-22)" style="font-size:70px">人</text>
<text class="wc" transform="translate(925 415) rotate(-22)" style="font-size:80px">人</text>
<text class="wc" transform="translate(310 645) rotate(-22)" style="font-size:62px">素</text>
<text class="wc" transform="translate(558 565) rotate(-22)" style="font-size:50px">人</text>
<text class="wd" transform="translate(490 130) rotate(-24)" style="font-size:60px;font-family:'Noto Sans CJK SC',sans-serif">素材</text>
<text class="wd" transform="translate(150 200) rotate(-30)" style="font-size:60px;font-family:'Noto Sans CJK SC',sans-serif">人人</text>
<text x="610" y="702" textLength="120" lengthAdjust="spacingAndGlyphs" style="font-size:28px;font-family:'Noto Sans CJK SC',sans-serif;font-weight:bold;fill:#fff;fill-opacity:.42">人人素材</text>
<circle cx="575" cy="690" r="20" fill="none" stroke="#fff" stroke-opacity=".3" stroke-width="3"/>
</svg>
</body></html>
